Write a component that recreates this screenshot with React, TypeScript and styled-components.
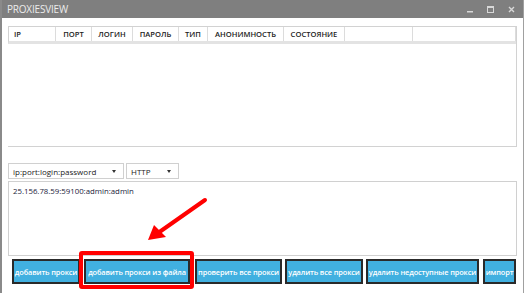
import { createGlobalStyle, styled } from 'styled-components';

const GlobalStyle = createGlobalStyle`
  html, body {
    margin: 0;
    padding: 0;
    background: #fff;
  }
  body {
    font-family: 'Open Sans', 'Noto Sans', sans-serif;
  }
`;

const Window = styled.div`
  position: relative;
  width: 521px;
  height: 293px;
  border-left: 2px solid #8a8a8a;
  border-right: 1px solid #a0a0a0;
  display: flex;
  flex-direction: column;
  background: #fff;
  overflow: hidden;
`;

const TitleBar = styled.div`
  height: 18px;
  background: #7f7f7f;
  display: flex;
  align-items: center;
  justify-content: space-between;
  padding: 0 8px 0 5px;
  color: #ececec;
  font-size: 10px;
  letter-spacing: -0.2px;
`;

const Controls = styled.div`
  display: flex;
  gap: 14px;
  align-items: center;
`;

const Content = styled.div`
  padding: 8px 6px 0 6px;
  display: flex;
  flex-direction: column;
`;

const ListView = styled.div`
  height: 119px;
  border: 1px solid #d2d2d2;
  border-left: 0;
`;

const HeaderRow = styled.div`
  display: grid;
  grid-template-columns: 47px 36px 41px 46px 29px 76px 61px 68px 1fr;
  height: 14px;
  border-bottom: 3px solid #e3e3e3;
  border-left: 1px solid #d2d2d2;
`;

const HeaderCell = styled.div<{ $left?: boolean }>`
  border-right: 1px solid #dcdcdc;
  font-size: 7.6px;
  font-weight: 600;
  color: #222;
  display: flex;
  align-items: center;
  justify-content: ${p => (p.$left ? 'flex-start' : 'center')};
  padding-left: ${p => (p.$left ? '5px' : '0')};
  white-space: nowrap;
`;

const ComboRow = styled.div`
  margin-top: 16px;
  display: flex;
  gap: 2px;
  height: 16px;
`;

const Combo = styled.div<{ $w: number }>`
  width: ${p => p.$w}px;
  border: 1px solid #d0d0d0;
  display: flex;
  align-items: center;
  justify-content: space-between;
  padding: 0 7px 0 4px;
  box-sizing: border-box;
  height: 16px;
  font-size: 8px;
  color: #222;
`;

const Caret = styled.span`
  width: 0;
  height: 0;
  border-left: 2.5px solid transparent;
  border-right: 2.5px solid transparent;
  border-top: 3px solid #333;
`;

const TextBox = styled.div`
  margin-top: 2px;
  height: 75px;
  border: 1px solid #d0d0d0;
  padding: 4px 4px;
  box-sizing: border-box;
  font-size: 7.8px;
  color: #1a1a3a;
`;

const ButtonRow = styled.div`
  margin-top: 3px;
  padding-left: 4px;
  display: flex;
  height: 25px;
`;

const Slot = styled.div<{ $gap: number }>`
  position: relative;
  margin-left: ${p => p.$gap}px;
  display: flex;
`;

const Button = styled.button<{ $w: number }>`
  width: ${p => p.$w}px;
  height: 25px;
  background: #41b0e0;
  border: 2px solid #2a2a2a;
  color: #fff;
  font-family: 'Open Sans', 'Noto Sans', sans-serif;
  font-size: 7.4px;
  font-weight: 600;
  letter-spacing: -0.12px;
  padding: 0;
  white-space: nowrap;
  overflow: hidden;
`;

const Highlight = styled.span`
  position: absolute;
  left: -5px;
  right: -4px;
  top: -8px;
  bottom: -5px;
  border: 4px solid #f00;
  border-radius: 3px;
  pointer-events: none;
`;

const Arrow = styled.svg`
  position: absolute;
  left: 140px;
  top: 195px;
`;

const columns = ['IP', 'ПОРТ', 'ЛОГИН', 'ПАРОЛЬ', 'ТИП', 'АНОНИМНОСТЬ', 'СОСТОЯНИЕ', '', ''];

const buttons = [
  { label: 'добавить прокси', w: 68, gap: 0 },
  { label: 'добавить прокси из файла', w: 106, gap: 4, marked: true },
  { label: 'проверить все прокси', w: 87, gap: 5 },
  { label: 'удалить все прокси', w: 78, gap: 3 },
  { label: 'удалить недоступные прокси', w: 113, gap: 3 },
  { label: 'импорт', w: 33, gap: 4 },
];

function App() {
  return (
    <>
      <GlobalStyle />
      <Window>
        <TitleBar>
          <span>PROXIESVIEW</span>
          <Controls>
            <svg width="6" height="8" viewBox="0 0 6 8">
              <rect x="0" y="6" width="6" height="1.5" fill="#d8d8d8" />
            </svg>
            <svg width="7" height="7" viewBox="0 0 7 7">
              <rect x="0.5" y="0.5" width="6" height="6" fill="none" stroke="#d8d8d8" />
              <rect x="0.5" y="0.5" width="6" height="1.5" fill="#d8d8d8" />
            </svg>
            <svg width="7" height="7" viewBox="0 0 7 7">
              <path d="M1 1 L6 6 M6 1 L1 6" stroke="#d8d8d8" strokeWidth="1.4" />
            </svg>
          </Controls>
        </TitleBar>
        <Content>
          <ListView>
            <HeaderRow>
              {columns.map((c, i) => (
                <HeaderCell key={i} $left={i === 0}>
                  {c}
                </HeaderCell>
              ))}
            </HeaderRow>
          </ListView>
          <ComboRow>
            <Combo $w={116}>
              <span>ip:port:login:password</span>
              <Caret />
            </Combo>
            <Combo $w={53}>
              <span>HTTP</span>
              <Caret />
            </Combo>
          </ComboRow>
          <TextBox>25.156.78.59:59100:admin:admin</TextBox>
          <ButtonRow>
            {buttons.map(b => (
              <Slot key={b.label} $gap={b.gap}>
                <Button $w={b.w}>{b.label}</Button>
                {b.marked && <Highlight />}
              </Slot>
            ))}
          </ButtonRow>
        </Content>
        <Arrow width="70" height="50" viewBox="0 0 70 50">
          <line x1="63" y1="5" x2="16" y2="38" stroke="#f00" strokeWidth="4" strokeLinecap="round" />
          <polygon points="6,45 12,30 24,42" fill="#f00" />
        </Arrow>
      </Window>
    </>
  );
}

export default App;
